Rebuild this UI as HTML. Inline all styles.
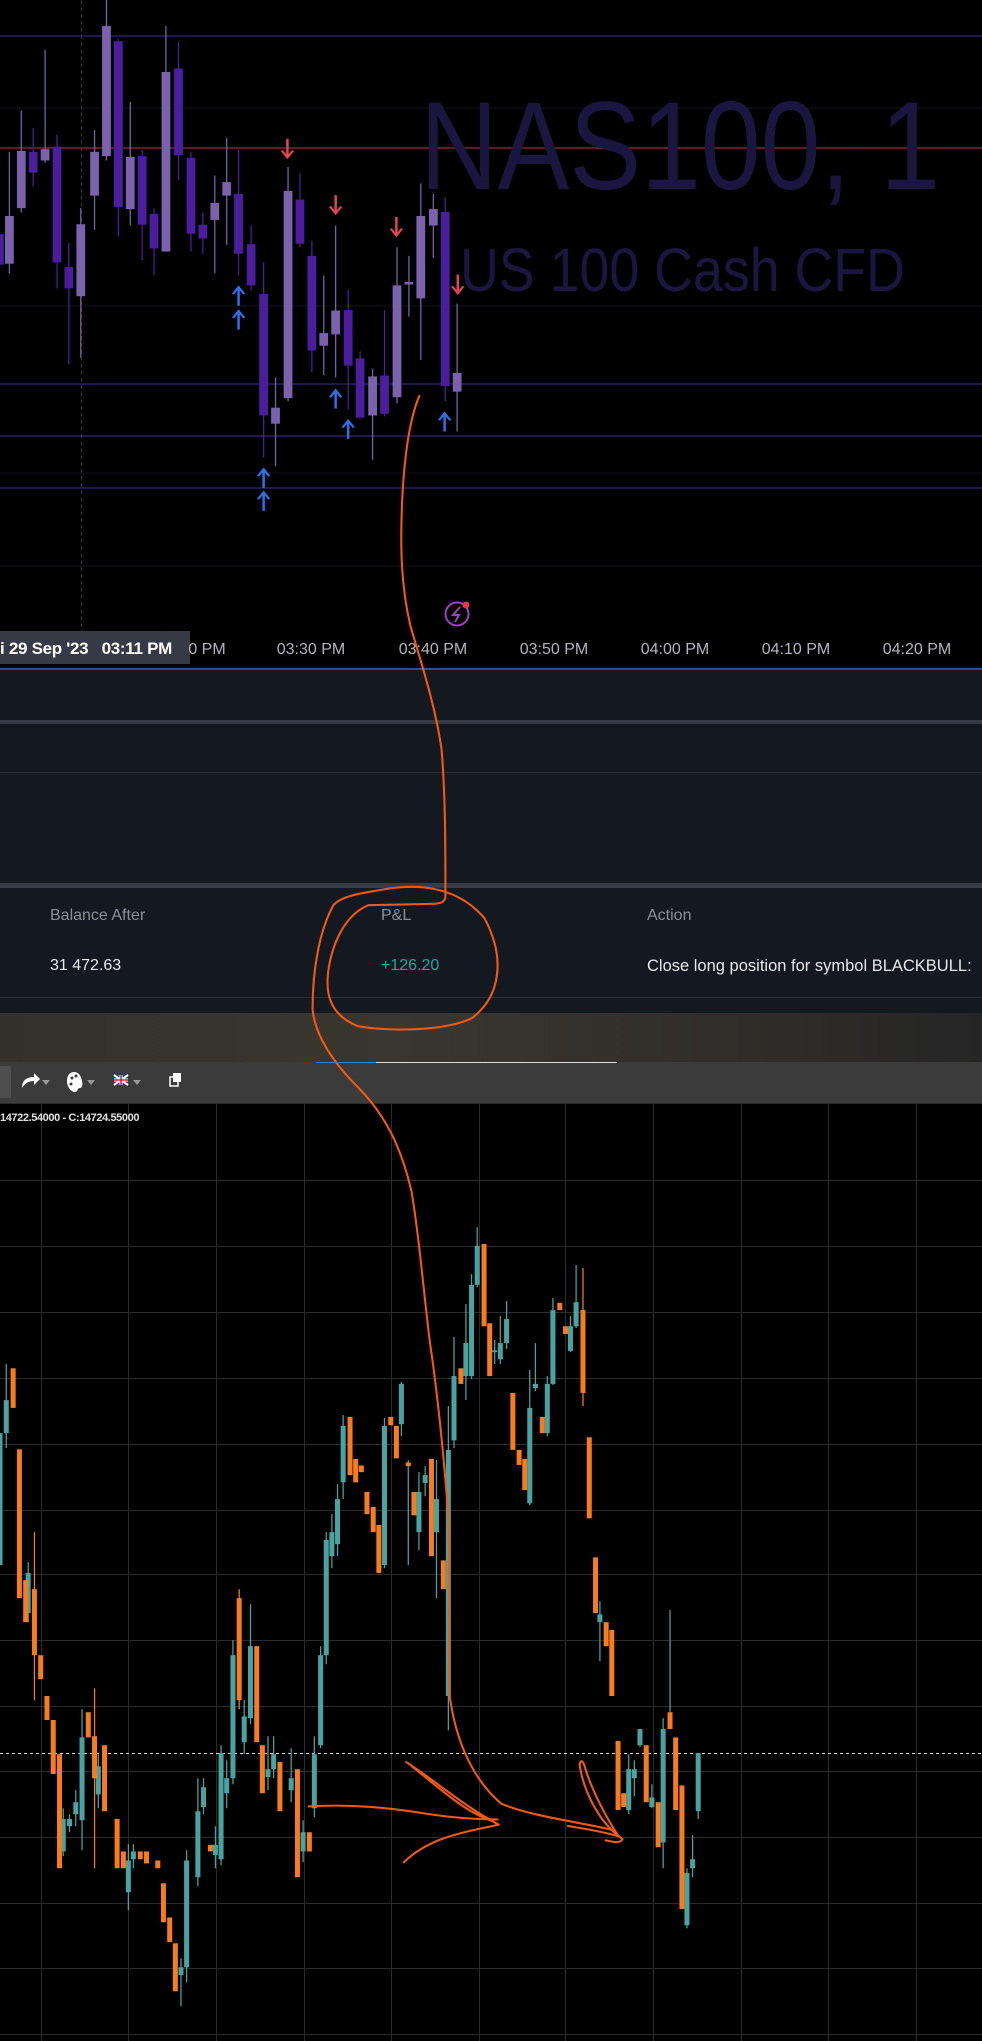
<!DOCTYPE html>
<html><head><meta charset="utf-8"><style>
html,body{margin:0;padding:0;background:#000;}
body{width:982px;height:2041px;position:relative;overflow:hidden;font-family:"Liberation Sans",sans-serif;}
.abs{position:absolute;}
.tl{position:absolute;top:641px;font-size:16px;color:#b2b5be;white-space:nowrap;transform:translateX(-50%);}
.th{position:absolute;top:907px;font-size:16px;color:#8b8f9a;}
.tv{position:absolute;top:957px;font-size:16px;color:#e8e8ea;}
</style></head><body>
<!-- top chart -->
<svg class="abs" style="left:0;top:0" width="982" height="668">
<rect width="982" height="668" fill="#000"/>
<g stroke="#15151d" stroke-width="1"><line x1="0" y1="108" x2="982" y2="108"/><line x1="0" y1="306" x2="982" y2="306"/><line x1="0" y1="473" x2="982" y2="473"/><line x1="0" y1="566" x2="982" y2="566"/></g>
<line x1="81.5" y1="0" x2="81.5" y2="631" stroke="#333" stroke-dasharray="4,3"/>
<line x1="0" y1="36" x2="982" y2="36" stroke="#3b2f8a"/>
<line x1="0" y1="148" x2="982" y2="148" stroke="#5a1f22" stroke-width="2"/>
<line x1="0" y1="384" x2="982" y2="384" stroke="#3b2f8a"/>
<line x1="0" y1="436" x2="982" y2="436" stroke="#4a2f8a"/>
<line x1="0" y1="488" x2="982" y2="488" stroke="#3b2f8a"/>
<text x="420" y="189" font-family="Liberation Sans" font-size="125" fill="#1b1640" textLength="520" lengthAdjust="spacingAndGlyphs">NAS100, 1</text>
<text x="460" y="291" font-family="Liberation Sans" font-size="61" fill="#1b1640" textLength="445" lengthAdjust="spacingAndGlyphs">US 100 Cash CFD</text>
<g transform="scale(0.6262,0.4337)">
<g fill="#7b62ad">
<rect x="14" y="350" width="2" height="280"/><rect x="8" y="498" width="14" height="110"/>
<rect x="33" y="255" width="2" height="235"/><rect x="27" y="348" width="14" height="132"/>
<rect x="71" y="115" width="2" height="260"/><rect x="65" y="344" width="14" height="26"/>
<rect x="128" y="480" width="2" height="345"/><rect x="122" y="517" width="14" height="166"/>
<rect x="150" y="300" width="2" height="230"/><rect x="144" y="350" width="14" height="101"/>
<rect x="169" y="0" width="2" height="370"/><rect x="163" y="60" width="14" height="300"/>
<rect x="207" y="235" width="2" height="285"/><rect x="201" y="362" width="14" height="120"/>
<rect x="264" y="60" width="2" height="520"/><rect x="258" y="166" width="14" height="414"/>
<rect x="342" y="405" width="2" height="225"/><rect x="336" y="468" width="14" height="39"/>
<rect x="361" y="318" width="2" height="247"/><rect x="355" y="420" width="14" height="31"/>
<rect x="439" y="870" width="2" height="205"/><rect x="433" y="940" width="14" height="37"/>
<rect x="459" y="385" width="2" height="540"/><rect x="453" y="440" width="14" height="478"/>
<rect x="516" y="635" width="2" height="230"/><rect x="510" y="768" width="14" height="29"/>
<rect x="535" y="520" width="2" height="350"/><rect x="529" y="716" width="14" height="55"/>
<rect x="594" y="850" width="2" height="210"/><rect x="588" y="868" width="14" height="90"/>
<rect x="633" y="570" width="2" height="360"/><rect x="627" y="658" width="14" height="258"/>
<rect x="652" y="590" width="2" height="140"/><rect x="646" y="650" width="14" height="6"/>
<rect x="671" y="423" width="2" height="407"/><rect x="665" y="498" width="14" height="190"/>
<rect x="691" y="447" width="2" height="148"/><rect x="685" y="482" width="14" height="38"/>
<rect x="729" y="700" width="2" height="295"/><rect x="723" y="860" width="14" height="43"/>
</g>
<g fill="#4b1e9e">
<rect x="0" y="540" width="6" height="70"/>
<rect x="52" y="295" width="2" height="135"/><rect x="46" y="350" width="14" height="48"/>
<rect x="90" y="310" width="2" height="355"/><rect x="84" y="338" width="14" height="267"/>
<rect x="109" y="560" width="2" height="280"/><rect x="103" y="616" width="14" height="49"/>
<rect x="188" y="90" width="2" height="455"/><rect x="182" y="95" width="14" height="382"/>
<rect x="226" y="345" width="2" height="255"/><rect x="220" y="360" width="14" height="158"/>
<rect x="245" y="480" width="2" height="155"/><rect x="239" y="493" width="14" height="80"/>
<rect x="284" y="97" width="2" height="318"/><rect x="278" y="158" width="14" height="200"/>
<rect x="304" y="350" width="2" height="230"/><rect x="298" y="364" width="14" height="175"/>
<rect x="323" y="490" width="2" height="95"/><rect x="317" y="518" width="14" height="32"/>
<rect x="380" y="345" width="2" height="290"/><rect x="374" y="447" width="14" height="138"/>
<rect x="400" y="520" width="2" height="150"/><rect x="394" y="563" width="14" height="95"/>
<rect x="420" y="605" width="2" height="450"/><rect x="414" y="678" width="14" height="280"/>
<rect x="478" y="400" width="2" height="170"/><rect x="472" y="460" width="14" height="102"/>
<rect x="497" y="555" width="2" height="303"/><rect x="491" y="590" width="14" height="218"/>
<rect x="555" y="668" width="2" height="277"/><rect x="549" y="715" width="14" height="128"/>
<rect x="574" y="810" width="2" height="155"/><rect x="568" y="826" width="14" height="137"/>
<rect x="613" y="715" width="2" height="245"/><rect x="607" y="866" width="14" height="88"/>
<rect x="710" y="455" width="2" height="470"/><rect x="704" y="489" width="14" height="401"/>
</g>
<g stroke="#2f6fe8" stroke-width="4" fill="none">
<path d="M381 705V662M372 678L381 662L390 678"/><path d="M381 760V717M372 733L381 717L390 733"/>
<path d="M421 1125V1082M412 1098L421 1082L430 1098"/><path d="M421 1178V1135M412 1151L421 1135L430 1151"/>
<path d="M536 942V900M527 916L536 900L545 916"/><path d="M556 1012V970M547 986L556 970L565 986"/>
<path d="M710 995V953M701 969L710 953L719 969"/>
</g>
<g stroke="#e04455" stroke-width="4" fill="none">
<path d="M459 320V363M450 347L459 363L468 347"/><path d="M536 450V492M527 476L536 492L545 476"/>
<path d="M633 500V543M624 527L633 543L642 527"/><path d="M731 633V676M722 660L731 676L740 660"/>
</g>
</g>
<circle cx="457" cy="614" r="11.5" fill="none" stroke="#9b3fc0" stroke-width="2"/>
<path d="M460 607L453 615H459L455 622" stroke="#9b3fc0" stroke-width="2" fill="none"/>
<circle cx="466" cy="605" r="3.5" fill="#e8354a"/>
<rect x="0" y="631" width="190" height="33" fill="#363a45"/>
</svg>
<div class="abs" style="left:0;top:639px;font-size:17px;color:#fff;font-weight:bold;white-space:nowrap;letter-spacing:-0.3px">i 29 Sep '23&nbsp;&nbsp;&nbsp;03:11 PM</div>
<div class="tl" style="left:207px;">0 PM</div>
<div class="tl" style="left:311px;">03:30 PM</div>
<div class="tl" style="left:433px;">03:40 PM</div>
<div class="tl" style="left:554px;">03:50 PM</div>
<div class="tl" style="left:675px;">04:00 PM</div>
<div class="tl" style="left:796px;">04:10 PM</div>
<div class="tl" style="left:917px;">04:20 PM</div>
<!-- panel -->
<div class="abs" style="left:0;top:668px;width:982px;height:2px;background:#2a4aa8"></div>
<div class="abs" style="left:0;top:670px;width:982px;height:343px;background:#141821"></div>
<div class="abs" style="left:0;top:720px;width:982px;height:4px;background:#363a45"></div>
<div class="abs" style="left:0;top:772px;width:982px;height:1px;background:#2a2e39"></div>
<div class="abs" style="left:0;top:883px;width:982px;height:5px;background:#363a45"></div>
<div class="abs" style="left:0;top:997px;width:982px;height:1px;background:#2a2e39"></div>
<div class="th" style="left:50px">Balance After</div>
<div class="th" style="left:381px">P&amp;L</div>
<div class="th" style="left:647px">Action</div>
<div class="tv" style="left:50px">31 472.63</div>
<div class="tv" style="left:381px;color:#26a69a">+126.20</div>
<div class="tv" style="left:647px;white-space:nowrap;font-size:16.5px">Close long position for symbol BLACKBULL:</div>
<div class="abs" style="left:0;top:1013px;width:982px;height:50px;background:linear-gradient(90deg,#33312a,#3a372f 40%,#2e2c28 80%,#252525)"></div>
<div class="abs" style="left:0;top:1062px;width:982px;height:41px;background:#3b3b3b"></div>
<div class="abs" style="left:316px;top:1062px;width:60px;height:1px;background:#3a7bc8"></div>
<div class="abs" style="left:376px;top:1062px;width:241px;height:1px;background:#ddd"></div>
<div class="abs" style="left:0;top:1066px;width:11px;height:32px;background:#4e4e4e"></div>
<svg class="abs" style="left:0;top:1066px" width="200" height="34">
<path d="M22 22C22 14 27 11 34 11V7L40 13L34 19V15C29 15 25 17 22 22Z" fill="#fff"/>
<path d="M42 14H50L46 19Z" fill="#999"/>
<path d="M74 6C68 6 67 12 67 15C67 21 71 26 75 26C78 26 77 22 80 22C82 22 83 19 82 15C81 9 78 6 74 6Z" fill="#fff"/>
<circle cx="72" cy="12" r="1.5" fill="#3b3b3b"/><circle cx="71" cy="18" r="1.5" fill="#3b3b3b"/><circle cx="76" cy="10" r="1.5" fill="#3b3b3b"/>
<path d="M87 14H95L91 19Z" fill="#999"/>
<rect x="114" y="9" width="14" height="10" fill="#2a3a8c"/>
<path d="M114 9L128 19M128 9L114 19" stroke="#fff" stroke-width="2"/>
<path d="M121 9V19M114 14H128" stroke="#fff" stroke-width="3"/>
<path d="M121 9V19M114 14H128" stroke="#d0243a" stroke-width="1.5"/>
<path d="M133 14H141L137 19Z" fill="#999"/>
<rect x="170" y="11" width="8" height="9" fill="none" stroke="#fff" stroke-width="1.5"/>
<rect x="173" y="7" width="8" height="9" fill="#fff"/>
</svg>
<!-- bottom chart -->
<svg class="abs" style="left:0;top:1103px" width="982" height="938">
<rect width="982" height="938" fill="#000"/>
<g stroke="#2b2b2b" stroke-width="1">
<line x1="41.5" y1="0" x2="41.5" y2="938"/><line x1="128.5" y1="0" x2="128.5" y2="938"/><line x1="216.5" y1="0" x2="216.5" y2="938"/><line x1="304.5" y1="0" x2="304.5" y2="938"/><line x1="391.5" y1="0" x2="391.5" y2="938"/><line x1="479.5" y1="0" x2="479.5" y2="938"/><line x1="565.5" y1="0" x2="565.5" y2="938"/><line x1="653.5" y1="0" x2="653.5" y2="938"/><line x1="741.5" y1="0" x2="741.5" y2="938"/><line x1="828.5" y1="0" x2="828.5" y2="938"/><line x1="916.5" y1="0" x2="916.5" y2="938"/>
<line x1="0" y1="0.5" x2="982" y2="0.5"/><line x1="0" y1="77.5" x2="982" y2="77.5"/><line x1="0" y1="143.5" x2="982" y2="143.5"/><line x1="0" y1="209.5" x2="982" y2="209.5"/><line x1="0" y1="275.5" x2="982" y2="275.5"/><line x1="0" y1="341.5" x2="982" y2="341.5"/><line x1="0" y1="407.5" x2="982" y2="407.5"/><line x1="0" y1="471.5" x2="982" y2="471.5"/><line x1="0" y1="537.5" x2="982" y2="537.5"/><line x1="0" y1="603.5" x2="982" y2="603.5"/><line x1="0" y1="668.5" x2="982" y2="668.5"/><line x1="0" y1="734.5" x2="982" y2="734.5"/><line x1="0" y1="800.5" x2="982" y2="800.5"/><line x1="0" y1="865.5" x2="982" y2="865.5"/><line x1="0" y1="931.5" x2="982" y2="931.5"/>
</g>
<line x1="0" y1="650.5" x2="982" y2="650.5" stroke="#ddd" stroke-dasharray="3,3"/>
<text x="0" y="18" font-size="11" font-weight="bold" fill="#e0e0e0" font-family="Liberation Sans" letter-spacing="-0.4">14722.54000 - C:14724.55000</text>
<g transform="translate(0,-3) scale(0.6262,0.6002)">
<g fill="#4aa3a0">
<rect x="9" y="440" width="2" height="140"/><rect x="6" y="500" width="8" height="55"/>
<rect x="0" y="555" width="4" height="220"/>
<rect x="44" y="770" width="2" height="100"/><rect x="41" y="788" width="8" height="67"/>
<rect x="100" y="1180" width="2" height="80"/><rect x="97" y="1198" width="8" height="54"/>
<rect x="110" y="1190" width="2" height="30"/><rect x="107" y="1198" width="8" height="12"/>
<rect x="120" y="1150" width="2" height="60"/><rect x="117" y="1170" width="8" height="20"/>
<rect x="130" y="1015" width="2" height="235"/><rect x="127" y="1062" width="8" height="138"/>
<rect x="156" y="1090" width="2" height="90"/><rect x="153" y="1110" width="8" height="47"/>
<rect x="204" y="1240" width="2" height="110"/><rect x="201" y="1267" width="8" height="53"/>
<rect x="212" y="1240" width="2" height="40"/><rect x="209" y="1252" width="8" height="13"/>
<rect x="288" y="1430" width="2" height="80"/><rect x="285" y="1445" width="8" height="13"/>
<rect x="297" y="1250" width="2" height="220"/><rect x="294" y="1267" width="8" height="178"/>
<rect x="315" y="1130" width="2" height="180"/><rect x="312" y="1185" width="8" height="110"/>
<rect x="324" y="1130" width="2" height="60"/><rect x="321" y="1145" width="8" height="33"/>
<rect x="343" y="1210" width="2" height="70"/><rect x="340" y="1241" width="8" height="17"/>
<rect x="352" y="1075" width="2" height="200"/><rect x="349" y="1088" width="8" height="177"/>
<rect x="361" y="1100" width="2" height="80"/><rect x="358" y="1130" width="8" height="25"/>
<rect x="371" y="900" width="2" height="240"/><rect x="368" y="925" width="8" height="205"/>
<rect x="389" y="1000" width="2" height="90"/><rect x="386" y="1027" width="8" height="43"/>
<rect x="399" y="840" width="2" height="200"/><rect x="396" y="910" width="8" height="120"/>
<rect x="427" y="1060" width="2" height="90"/><rect x="424" y="1115" width="8" height="13"/>
<rect x="436" y="1060" width="2" height="70"/><rect x="433" y="1090" width="8" height="25"/>
<rect x="464" y="1080" width="2" height="90"/><rect x="461" y="1130" width="8" height="20"/>
<rect x="483" y="1200" width="2" height="70"/><rect x="480" y="1220" width="8" height="32"/>
<rect x="501" y="1060" width="2" height="135"/><rect x="498" y="1090" width="8" height="90"/>
<rect x="511" y="910" width="2" height="170"/><rect x="508" y="925" width="8" height="150"/>
<rect x="520" y="720" width="2" height="220"/><rect x="517" y="733" width="8" height="192"/>
<rect x="529" y="690" width="2" height="90"/><rect x="526" y="720" width="8" height="40"/>
<rect x="538" y="640" width="2" height="120"/><rect x="535" y="665" width="8" height="75"/>
<rect x="547" y="525" width="2" height="140"/><rect x="544" y="543" width="8" height="94"/>
<rect x="613" y="530" width="2" height="250"/><rect x="610" y="543" width="8" height="232"/>
<rect x="640" y="470" width="2" height="90"/><rect x="637" y="473" width="8" height="67"/>
<rect x="651" y="600" width="2" height="175"/>
<rect x="668" y="620" width="2" height="130"/><rect x="665" y="653" width="8" height="67"/>
<rect x="678" y="610" width="2" height="50"/><rect x="675" y="625" width="8" height="13"/>
<rect x="696" y="600" width="2" height="230"/><rect x="693" y="665" width="8" height="55"/>
<rect x="715" y="510" width="2" height="540"/><rect x="712" y="583" width="8" height="410"/>
<rect x="724" y="395" width="2" height="185"/><rect x="721" y="460" width="8" height="107"/>
<rect x="743" y="340" width="2" height="160"/><rect x="740" y="405" width="8" height="55"/>
<rect x="752" y="290" width="2" height="175"/><rect x="749" y="308" width="8" height="152"/>
<rect x="761" y="212" width="2" height="100"/><rect x="758" y="243" width="8" height="65"/>
<rect x="789" y="400" width="2" height="40"/><rect x="786" y="417" width="8" height="3"/>
<rect x="798" y="360" width="2" height="80"/><rect x="795" y="405" width="8" height="27"/>
<rect x="808" y="335" width="2" height="80"/><rect x="805" y="365" width="8" height="40"/>
<rect x="845" y="450" width="2" height="225"/><rect x="842" y="513" width="8" height="159"/>
<rect x="854" y="405" width="2" height="80"/><rect x="851" y="473" width="8" height="7"/>
<rect x="873" y="460" width="2" height="100"/><rect x="870" y="473" width="8" height="82"/>
<rect x="882" y="330" width="2" height="145"/><rect x="879" y="350" width="8" height="123"/>
<rect x="910" y="360" width="2" height="60"/><rect x="907" y="377" width="8" height="41"/>
<rect x="919" y="275" width="2" height="105"/><rect x="916" y="337" width="8" height="40"/>
<rect x="957" y="835" width="2" height="100"/><rect x="954" y="857" width="8" height="13"/>
<rect x="1003" y="1090" width="2" height="100"/><rect x="1000" y="1115" width="8" height="68"/>
<rect x="1012" y="1100" width="2" height="60"/><rect x="1009" y="1115" width="8" height="15"/>
<rect x="1021" y="1048" width="2" height="30"/><rect x="1018" y="1048" width="8" height="27"/>
<rect x="1040" y="1140" width="2" height="40"/><rect x="1037" y="1162" width="8" height="16"/>
<rect x="1058" y="1030" width="2" height="250"/><rect x="1055" y="1048" width="8" height="189"/>
<rect x="1069" y="850" width="2" height="170"/>
<rect x="1096" y="1280" width="2" height="100"/><rect x="1093" y="1288" width="8" height="87"/>
<rect x="1105" y="1225" width="2" height="70"/><rect x="1102" y="1265" width="8" height="15"/>
<rect x="1114" y="1088" width="2" height="110"/><rect x="1111" y="1088" width="8" height="97"/>
</g>
<g fill="#f57c1f">
<rect x="17" y="447" width="8" height="66"/>
<rect x="27" y="582" width="8" height="248"/>
<rect x="37" y="800" width="8" height="70"/>
<rect x="54" y="720" width="2" height="280"/><rect x="51" y="815" width="8" height="110"/>
<rect x="61" y="925" width="8" height="40"/>
<rect x="71" y="993" width="8" height="40"/>
<rect x="81" y="1033" width="8" height="90"/>
<rect x="91" y="1090" width="8" height="190"/>
<rect x="137" y="1020" width="8" height="42"/>
<rect x="150" y="980" width="2" height="300"/><rect x="147" y="1060" width="8" height="70"/>
<rect x="163" y="1075" width="8" height="110"/>
<rect x="183" y="1198" width="8" height="82"/>
<rect x="193" y="1252" width="8" height="28"/>
<rect x="220" y="1252" width="8" height="13"/>
<rect x="230" y="1252" width="8" height="20"/>
<rect x="248" y="1267" width="8" height="13"/>
<rect x="257" y="1305" width="8" height="65"/>
<rect x="267" y="1362" width="8" height="41"/>
<rect x="276" y="1405" width="8" height="80"/>
<rect x="332" y="1241" width="8" height="11"/>
<rect x="381" y="815" width="2" height="200"/><rect x="378" y="830" width="8" height="170"/>
<rect x="406" y="910" width="8" height="160"/>
<rect x="415" y="1075" width="8" height="80"/>
<rect x="443" y="1103" width="8" height="82"/>
<rect x="471" y="1115" width="8" height="180"/>
<rect x="490" y="1220" width="8" height="32"/>
<rect x="555" y="528" width="8" height="97"/>
<rect x="564" y="598" width="8" height="39"/>
<rect x="573" y="609" width="8" height="11"/>
<rect x="582" y="653" width="8" height="37"/>
<rect x="592" y="678" width="8" height="42"/>
<rect x="601" y="708" width="8" height="80"/>
<rect x="620" y="528" width="8" height="14"/>
<rect x="629" y="543" width="8" height="54"/>
<rect x="648" y="604" width="8" height="6"/>
<rect x="657" y="653" width="8" height="39"/>
<rect x="685" y="598" width="8" height="162"/>
<rect x="704" y="767" width="8" height="48"/>
<rect x="732" y="447" width="8" height="26"/>
<rect x="769" y="240" width="8" height="137"/>
<rect x="778" y="372" width="8" height="88"/>
<rect x="815" y="488" width="8" height="95"/>
<rect x="825" y="583" width="8" height="25"/>
<rect x="834" y="598" width="8" height="52"/>
<rect x="862" y="528" width="8" height="27"/>
<rect x="890" y="338" width="8" height="12"/>
<rect x="899" y="377" width="8" height="13"/>
<rect x="930" y="280" width="2" height="230"/><rect x="927" y="350" width="8" height="138"/>
<rect x="937" y="562" width="8" height="135"/>
<rect x="947" y="762" width="8" height="93"/>
<rect x="964" y="870" width="8" height="40"/>
<rect x="973" y="883" width="8" height="110"/>
<rect x="983" y="1068" width="8" height="115"/>
<rect x="992" y="1155" width="8" height="23"/>
<rect x="1028" y="1075" width="8" height="95"/>
<rect x="1047" y="1170" width="8" height="75"/>
<rect x="1066" y="1020" width="8" height="28"/>
<rect x="1075" y="1062" width="8" height="121"/>
<rect x="1085" y="1142" width="8" height="206"/>
</g>
</g>
</svg>
<!-- hand drawing -->
<svg class="abs" style="left:0;top:0" width="982" height="2041">
<g transform="scale(1.3024)" fill="none" stroke="#f05a14" stroke-width="1.6" stroke-linecap="round" stroke-linejoin="round">
<path d="M322 304C315 320 311 345 309 380C307 420 308 450 315 480C322 505 334 540 339 575C342 610 342 650 342 688C342 693 338 694 330 694L283 695C270 700 258 715 253 740C248 765 255 780 275 788C300 792 340 792 362 782C385 765 388 735 372 705C355 685 330 678 300 682C275 686 262 688 256 695C245 715 240 745 240 775C242 795 255 815 275 835C295 855 308 880 316 915C322 950 325 990 330 1030C336 1070 340 1110 344 1160C346 1210 344 1260 345 1300C350 1340 365 1368 385 1385C410 1395 440 1398 470 1405"/>
<path d="M237 1387C270 1385 300 1388 330 1393C350 1396 365 1397 382 1397"/>
<path d="M312 1353C335 1368 358 1388 383 1401C360 1406 330 1410 310 1430"/>
<path d="M316 1356C340 1375 358 1392 378 1398"/>
<path d="M436 1402C448 1404 462 1406 475 1410C465 1395 455 1375 450 1360C448 1352 446 1350 445 1355C448 1375 460 1400 478 1412C476 1416 470 1414 465 1413"/>
</g>
</svg>
</body></html>
